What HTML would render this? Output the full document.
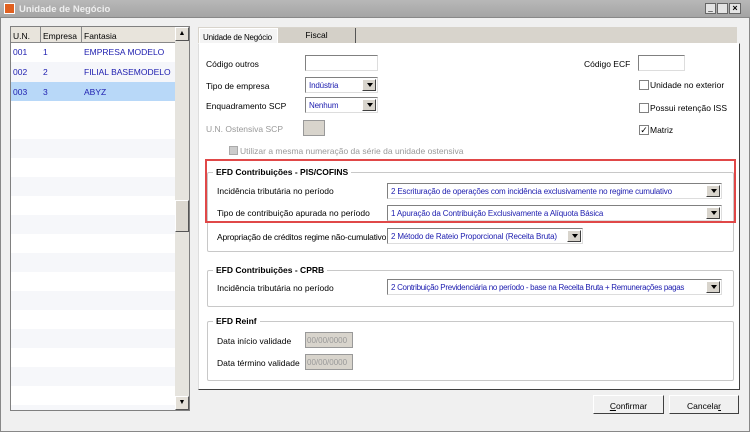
<!DOCTYPE html>
<html><head><meta charset="utf-8"><style>
*{box-sizing:border-box;margin:0;padding:0}
body{width:750px;height:432px;overflow:hidden;font-family:"Liberation Sans",sans-serif;font-size:8.5px;color:#000;background:#f0f0f0;position:relative}
.a{position:absolute;white-space:nowrap}
.inp{position:absolute;background:#fff;border:1px solid #808080;border-right-color:#ddd;border-bottom-color:#ddd}
.sel{position:absolute;background:#fff;border:1px solid #808080;border-right-color:#ddd;border-bottom-color:#ddd;color:#2020b0;padding:3px 0 0 3px;font-size:8px;letter-spacing:-0.15px;white-space:nowrap;overflow:hidden}
.sel:after{content:"";position:absolute;right:1px;top:1px;bottom:1px;width:12px;background:#d8d4cc;border:1px solid;border-color:#fff #404040 #404040 #fff}
.sel i{position:absolute;right:4px;top:5px;border-left:3px solid transparent;border-right:3px solid transparent;border-top:4px solid #000;z-index:2}
.grp{position:absolute;border:1px solid #c8c8c8;border-radius:2px}
.gt{position:absolute;background:#fff;font-weight:bold;padding:0 3px;top:-6px;left:5px;font-size:8.5px;white-space:nowrap}
.cb{position:absolute;width:10px;height:10px;background:#fff;border:1px solid #808080}
.btn{position:absolute;background:#f0f0f0;border:1px solid;border-color:#fff #404040 #404040 #fff;text-align:center;padding-top:5px;font-size:8.5px}
</style></head><body>
<div class="a" style="left:0;top:0;width:750px;height:18px;background:linear-gradient(#b8b8b8,#a4a4a4);border-bottom:1px solid #888"></div>
<div class="a" style="left:4px;top:3px;width:11px;height:11px;background:#e06020;border:1px solid #fff"></div>
<div class="a" style="left:19px;top:4px;font-weight:bold;color:#eee;font-size:9.5px">Unidade de Negócio</div>
<div class="a" style="left:705px;top:3px;width:11px;height:11px;background:#e4e4e4;border:1px solid #666;font-size:8px;line-height:8px;text-align:center">_</div>
<div class="a" style="left:717px;top:3px;width:11px;height:11px;background:#e4e4e4;border:1px solid #666"></div>
<div class="a" style="left:729px;top:3px;width:12px;height:11px;background:#e4e4e4;border:1px solid #666;font-size:9px;line-height:9px;text-align:center;font-weight:bold">×</div>
<div class="a" style="left:0;top:18px;width:750px;height:414px;border:1px solid #888;border-top:none"></div>

<!-- list -->
<div class="a" style="left:10px;top:26px;width:180px;height:385px;border:1px solid #808080;background:#fff"></div>
<div class="a" style="left:11px;top:27px;width:164px;height:16px;background:#e8e4dc;border-bottom:1px solid #888"></div>
<div class="a" style="left:40px;top:27px;width:1px;height:16px;background:#888"></div>
<div class="a" style="left:81px;top:27px;width:1px;height:16px;background:#888"></div>
<div class="a" style="left:13px;top:31px">U.N.</div>
<div class="a" style="left:43px;top:31px">Empresa</div>
<div class="a" style="left:84px;top:31px">Fantasia</div>
<div class="a" style="left:11px;top:62px;width:164px;height:20px;background:#f5f6fa"></div>
<div class="a" style="left:11px;top:82px;width:164px;height:19px;background:#b8d8f8"></div>
<div class="a" style="left:11px;top:120px;width:164px;height:290px;background:repeating-linear-gradient(#fff 0 19px,#f6f7fa 19px 38px)"></div>
<div class="a" style="left:13px;top:47px;color:#2020b0">001</div><div class="a" style="left:43px;top:47px;color:#2020b0">1</div><div class="a" style="left:84px;top:47px;color:#2020b0">EMPRESA MODELO</div>
<div class="a" style="left:13px;top:67px;color:#2020b0">002</div><div class="a" style="left:43px;top:67px;color:#2020b0">2</div><div class="a" style="left:84px;top:67px;color:#2020b0">FILIAL BASEMODELO</div>
<div class="a" style="left:13px;top:87px;color:#2020b0">003</div><div class="a" style="left:43px;top:87px;color:#2020b0">3</div><div class="a" style="left:84px;top:87px;color:#2020b0">ABYZ</div>
<div class="a" style="left:175px;top:27px;width:14px;height:383px;background:#e6e4de"></div>
<div class="a" style="left:175px;top:27px;width:14px;height:14px;background:#e4e0d8;border:1px solid;border-color:#fff #555 #555 #fff;font-size:7px;text-align:center;line-height:11px">▲</div>
<div class="a" style="left:175px;top:200px;width:14px;height:32px;background:#dcd8d0;border:1px solid;border-color:#fff #555 #555 #fff"></div>
<div class="a" style="left:175px;top:396px;width:14px;height:14px;background:#e4e0d8;border:1px solid;border-color:#fff #555 #555 #fff;font-size:7px;text-align:center;line-height:11px">▼</div>

<!-- tabs -->
<div class="a" style="left:198px;top:27px;width:539px;height:16px;background:#d8d4cc"></div>
<div class="a" style="left:199px;top:28px;width:79px;height:16px;background:#f4f4f4;border:1px solid #fff;padding:4px 0 0 3px;font-size:8px;letter-spacing:-0.2px">Unidade de Negócio</div>
<div class="a" style="left:278px;top:28px;width:78px;height:15px;background:#d4d0c8;border-right:1px solid #555;text-align:center;padding-top:2px">Fiscal</div>
<div class="a" style="left:198px;top:43px;width:542px;height:347px;background:#fff;border:1px solid;border-color:#fff #404040 #404040 #ddd"></div>

<div class="a" style="left:206px;top:59px">Código outros</div>
<div class="inp" style="left:305px;top:55px;width:73px;height:16px"></div>
<div class="a" style="left:206px;top:81px">Tipo de empresa</div>
<div class="sel" style="left:305px;top:77px;width:73px;height:16px">Indústria<i></i></div>
<div class="a" style="left:206px;top:101px">Enquadramento SCP</div>
<div class="sel" style="left:305px;top:97px;width:73px;height:16px">Nenhum<i></i></div>
<div class="a" style="left:206px;top:124px;color:#999">U.N. Ostensiva SCP</div>
<div class="a" style="left:303px;top:120px;width:22px;height:16px;background:#d8d4cc;border:1px solid #999"></div>
<div class="a" style="left:229px;top:146px;width:9px;height:9px;background:#ccc;border:1px solid #aaa"></div>
<div class="a" style="left:240px;top:146px;color:#999">Utilizar a mesma numeração da série da unidade ostensiva</div>
<div class="a" style="left:584px;top:59px">Código ECF</div>
<div class="inp" style="left:638px;top:55px;width:47px;height:16px"></div>
<div class="cb" style="left:639px;top:80px"></div><div class="a" style="left:650px;top:80px">Unidade no exterior</div>
<div class="cb" style="left:639px;top:103px"></div><div class="a" style="left:650px;top:103px">Possui retenção ISS</div>
<div class="cb" style="left:639px;top:125px;font-size:9px;line-height:8px;text-align:center">✓</div><div class="a" style="left:650px;top:125px">Matriz</div>

<div class="grp" style="left:207px;top:172px;width:527px;height:80px"><div class="gt">EFD Contribuições - PIS/COFINS</div></div>
<div class="a" style="left:205px;top:159px;width:531px;height:64px;border:2px solid #e04848"></div>
<div class="a" style="left:217px;top:186px">Incidência tributária no período</div>
<div class="sel" style="left:387px;top:183px;width:335px;height:16px">2 Escrituração de operações com incidência exclusivamente no regime cumulativo<i></i></div>
<div class="a" style="left:217px;top:208px">Tipo de contribuição apurada no período</div>
<div class="sel" style="left:387px;top:205px;width:335px;height:16px">1 Apuração da Contribuição Exclusivamente a Alíquota Básica<i></i></div>
<div class="a" style="left:217px;top:232px;letter-spacing:-0.2px">Apropriação de créditos regime não-cumulativo</div>
<div class="sel" style="left:387px;top:228px;width:196px;height:16px">2 Método de Rateio Proporcional (Receita Bruta)<i></i></div>

<div class="grp" style="left:207px;top:270px;width:527px;height:37px"><div class="gt">EFD Contribuições - CPRB</div></div>
<div class="a" style="left:217px;top:283px">Incidência tributária no período</div>
<div class="sel" style="left:387px;top:279px;width:335px;height:16px;letter-spacing:-0.3px">2 Contribuição Previdenciária no período - base na Receita Bruta + Remunerações pagas<i></i></div>

<div class="grp" style="left:207px;top:321px;width:527px;height:60px"><div class="gt">EFD Reinf</div></div>
<div class="a" style="left:217px;top:336px">Data início validade</div>
<div class="a" style="left:305px;top:332px;width:48px;height:16px;background:#d8d4cc;border:1px solid #999;color:#999;font-size:8px;padding:3px 0 0 1px">00/00/0000</div>
<div class="a" style="left:217px;top:358px">Data término validade</div>
<div class="a" style="left:305px;top:354px;width:48px;height:16px;background:#d8d4cc;border:1px solid #999;color:#999;font-size:8px;padding:3px 0 0 1px">00/00/0000</div>

<div class="btn" style="left:593px;top:395px;width:71px;height:19px"><u>C</u>onfirmar</div>
<div class="btn" style="left:669px;top:395px;width:70px;height:19px">Cancela<u>r</u></div>
</body></html>
